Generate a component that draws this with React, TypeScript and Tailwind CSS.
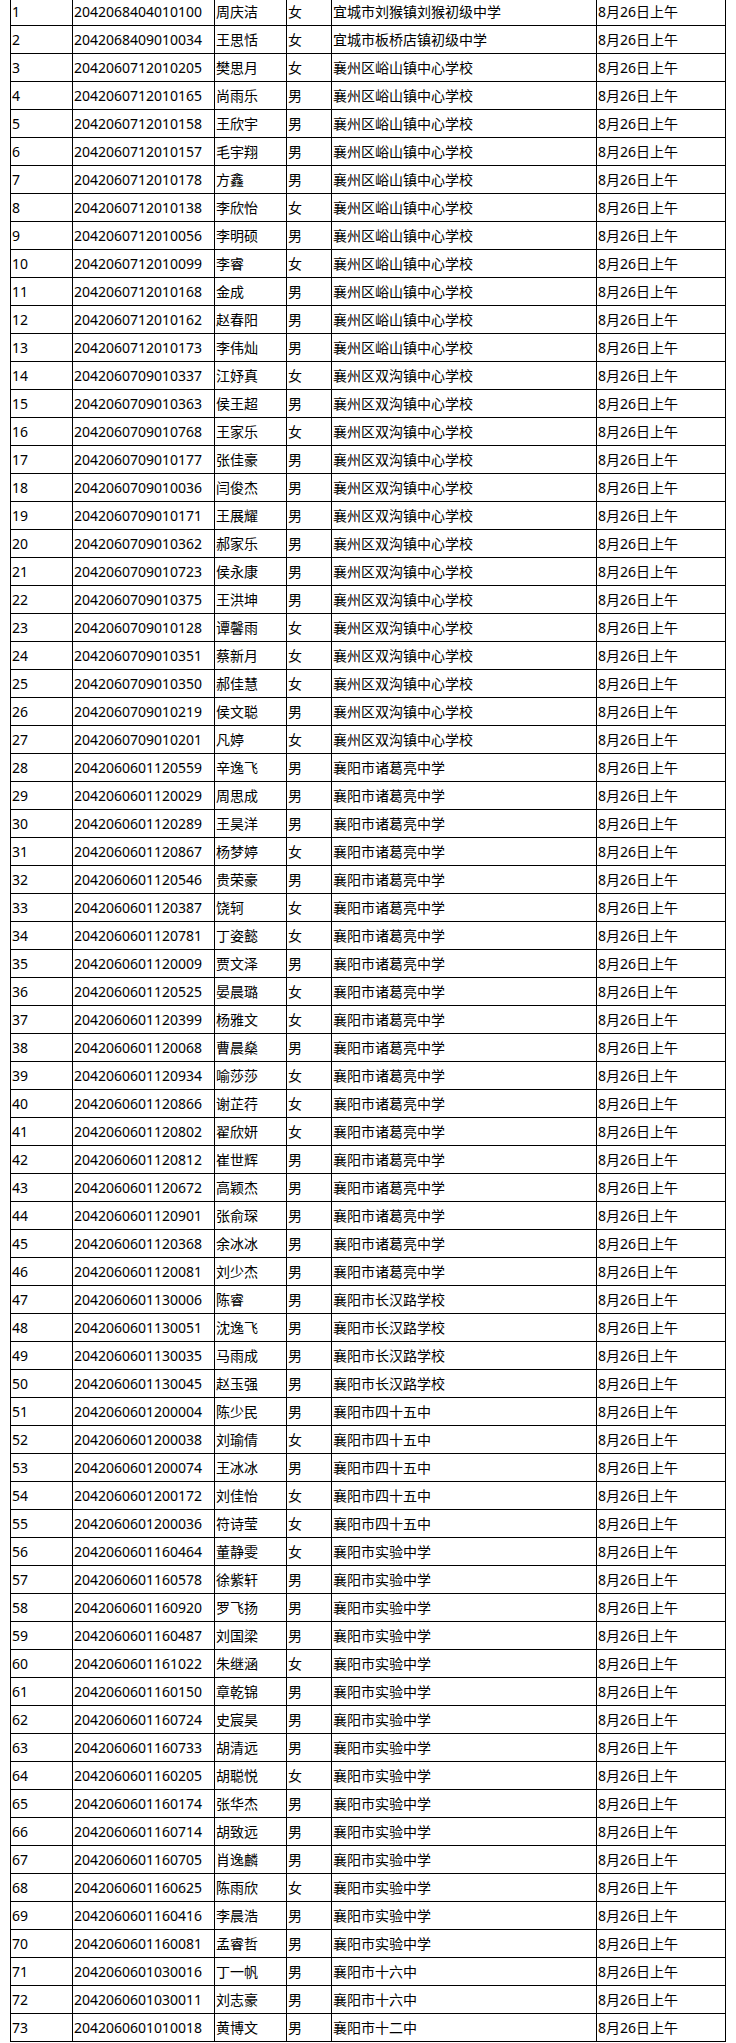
const SCHOOLS = {
  ys: "襄州区峪山镇中心学校",
  sg: "襄州区双沟镇中心学校",
  zgl: "襄阳市诸葛亮中学",
  ch: "襄阳市长汉路学校",
  s45: "襄阳市四十五中",
  sy: "襄阳市实验中学",
};

type Row = [string, string, string, string];

const rows: Row[] = [
  ["2042068404010100", "周庆洁", "女", "宜城市刘猴镇刘猴初级中学"],
  ["2042068409010034", "王思恬", "女", "宜城市板桥店镇初级中学"],
  ["2042060712010205", "樊思月", "女", SCHOOLS.ys],
  ["2042060712010165", "尚雨乐", "男", SCHOOLS.ys],
  ["2042060712010158", "王欣宇", "男", SCHOOLS.ys],
  ["2042060712010157", "毛宇翔", "男", SCHOOLS.ys],
  ["2042060712010178", "方鑫", "男", SCHOOLS.ys],
  ["2042060712010138", "李欣怡", "女", SCHOOLS.ys],
  ["2042060712010056", "李明硕", "男", SCHOOLS.ys],
  ["2042060712010099", "李睿", "女", SCHOOLS.ys],
  ["2042060712010168", "金成", "男", SCHOOLS.ys],
  ["2042060712010162", "赵春阳", "男", SCHOOLS.ys],
  ["2042060712010173", "李伟灿", "男", SCHOOLS.ys],
  ["2042060709010337", "江妤真", "女", SCHOOLS.sg],
  ["2042060709010363", "侯王超", "男", SCHOOLS.sg],
  ["2042060709010768", "王家乐", "女", SCHOOLS.sg],
  ["2042060709010177", "张佳豪", "男", SCHOOLS.sg],
  ["2042060709010036", "闫俊杰", "男", SCHOOLS.sg],
  ["2042060709010171", "王展耀", "男", SCHOOLS.sg],
  ["2042060709010362", "郝家乐", "男", SCHOOLS.sg],
  ["2042060709010723", "侯永康", "男", SCHOOLS.sg],
  ["2042060709010375", "王洪坤", "男", SCHOOLS.sg],
  ["2042060709010128", "谭馨雨", "女", SCHOOLS.sg],
  ["2042060709010351", "蔡新月", "女", SCHOOLS.sg],
  ["2042060709010350", "郝佳慧", "女", SCHOOLS.sg],
  ["2042060709010219", "侯文聪", "男", SCHOOLS.sg],
  ["2042060709010201", "凡婷", "女", SCHOOLS.sg],
  ["2042060601120559", "辛逸飞", "男", SCHOOLS.zgl],
  ["2042060601120029", "周思成", "男", SCHOOLS.zgl],
  ["2042060601120289", "王昊洋", "男", SCHOOLS.zgl],
  ["2042060601120867", "杨梦婷", "女", SCHOOLS.zgl],
  ["2042060601120546", "贵荣豪", "男", SCHOOLS.zgl],
  ["2042060601120387", "饶轲", "女", SCHOOLS.zgl],
  ["2042060601120781", "丁姿懿", "女", SCHOOLS.zgl],
  ["2042060601120009", "贾文泽", "男", SCHOOLS.zgl],
  ["2042060601120525", "晏晨璐", "女", SCHOOLS.zgl],
  ["2042060601120399", "杨雅文", "女", SCHOOLS.zgl],
  ["2042060601120068", "曹晨燊", "男", SCHOOLS.zgl],
  ["2042060601120934", "喻莎莎", "女", SCHOOLS.zgl],
  ["2042060601120866", "谢芷荇", "女", SCHOOLS.zgl],
  ["2042060601120802", "翟欣妍", "女", SCHOOLS.zgl],
  ["2042060601120812", "崔世辉", "男", SCHOOLS.zgl],
  ["2042060601120672", "高颖杰", "男", SCHOOLS.zgl],
  ["2042060601120901", "张俞琛", "男", SCHOOLS.zgl],
  ["2042060601120368", "余冰冰", "男", SCHOOLS.zgl],
  ["2042060601120081", "刘少杰", "男", SCHOOLS.zgl],
  ["2042060601130006", "陈睿", "男", SCHOOLS.ch],
  ["2042060601130051", "沈逸飞", "男", SCHOOLS.ch],
  ["2042060601130035", "马雨成", "男", SCHOOLS.ch],
  ["2042060601130045", "赵玉强", "男", SCHOOLS.ch],
  ["2042060601200004", "陈少民", "男", SCHOOLS.s45],
  ["2042060601200038", "刘瑜倩", "女", SCHOOLS.s45],
  ["2042060601200074", "王冰冰", "男", SCHOOLS.s45],
  ["2042060601200172", "刘佳怡", "女", SCHOOLS.s45],
  ["2042060601200036", "符诗莹", "女", SCHOOLS.s45],
  ["2042060601160464", "董静雯", "女", SCHOOLS.sy],
  ["2042060601160578", "徐紫轩", "男", SCHOOLS.sy],
  ["2042060601160920", "罗飞扬", "男", SCHOOLS.sy],
  ["2042060601160487", "刘国梁", "男", SCHOOLS.sy],
  ["2042060601161022", "朱继涵", "女", SCHOOLS.sy],
  ["2042060601160150", "章乾锦", "男", SCHOOLS.sy],
  ["2042060601160724", "史宸昊", "男", SCHOOLS.sy],
  ["2042060601160733", "胡清远", "男", SCHOOLS.sy],
  ["2042060601160205", "胡聪悦", "女", SCHOOLS.sy],
  ["2042060601160174", "张华杰", "男", SCHOOLS.sy],
  ["2042060601160714", "胡致远", "男", SCHOOLS.sy],
  ["2042060601160705", "肖逸麟", "男", SCHOOLS.sy],
  ["2042060601160625", "陈雨欣", "女", SCHOOLS.sy],
  ["2042060601160416", "李晨浩", "男", SCHOOLS.sy],
  ["2042060601160081", "孟睿哲", "男", SCHOOLS.sy],
  ["2042060601030016", "丁一帆", "男", "襄阳市十六中"],
  ["2042060601030011", "刘志豪", "男", "襄阳市十六中"],
  ["2042060601010018", "黄博文", "男", "襄阳市十二中"],
];

const cell = "border border-black px-px py-0 align-middle whitespace-nowrap overflow-hidden";

export default function App() {
  return (
    <div className="bg-white min-h-screen overflow-hidden">
      <table
        className="ml-[10px] -mt-[3px] w-[715px] table-fixed border-collapse text-[14px] leading-[20px] text-black"
        style={{ fontFamily: '"Noto Sans", "Noto Sans CJK SC", sans-serif' }}
      >
        <colgroup>
          <col className="w-[62px]" />
          <col className="w-[142px]" />
          <col className="w-[72px]" />
          <col className="w-[45px]" />
          <col className="w-[265px]" />
          <col className="w-[129px]" />
        </colgroup>
        <tbody>
          {rows.map(([id, name, sex, school], i) => (
            <tr key={id} className="h-[28px]">
              <td className={cell}>{i + 1}</td>
              <td className={cell}>{id}</td>
              <td className={cell}>{name}</td>
              <td className={cell}>{sex}</td>
              <td className={cell}>{school}</td>
              <td className={cell}>8月26日上午</td>
            </tr>
          ))}
        </tbody>
      </table>
    </div>
  );
}
